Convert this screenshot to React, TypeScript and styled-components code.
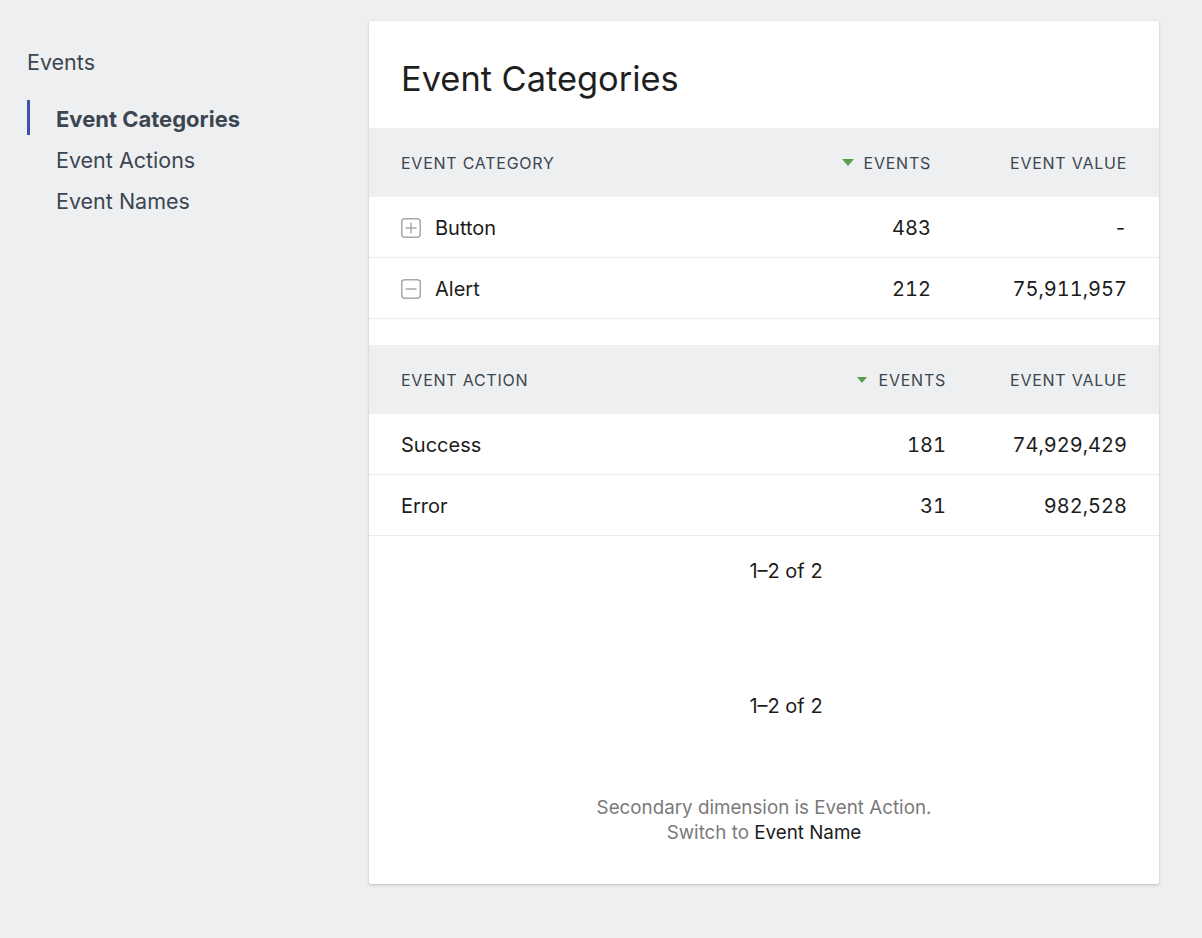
import React from "react";
import styled, { createGlobalStyle } from "styled-components";

const GlobalStyle = createGlobalStyle`
  html, body { margin: 0; padding: 0; background: #eeeff1; }
  body { font-family: Inter, "Noto Sans", sans-serif; -webkit-font-smoothing: antialiased; }
  * { box-sizing: border-box; }
`;

const Page = styled.div`
  display: grid;
  grid-template-columns: 369px 790px;
  padding-top: 21px;
  padding-bottom: 54px;
  min-height: 938px;
`;

const Sidebar = styled.aside`
  padding: 29px 0 0 27px;
`;

const SideTitle = styled.div`
  font-size: 21.5px;
  line-height: 24px;
  color: #3c4650;
  margin-bottom: 26px;
`;

const NavList = styled.nav`
  display: flex;
  flex-direction: column;
  gap: 6px;
`;

const NavItem = styled.a<{ $active?: boolean }>`
  display: flex;
  align-items: center;
  height: 35px;
  padding: 2px 0 0 26px;
  border-left: 3px solid ${(p) => (p.$active ? "#3f51a8" : "transparent")};
  font-size: ${(p) => (p.$active ? "22px" : "21.5px")};
  font-weight: ${(p) => (p.$active ? 700 : 400)};
  color: #3c4650;
  text-decoration: none;
  cursor: pointer;
`;

const Card = styled.section`
  background: #fff;
  border-radius: 2px;
  box-shadow: 0 1px 3px rgba(0, 0, 0, 0.22);
  padding-bottom: 39px;
  align-self: start;
`;

const Title = styled.h1`
  margin: 0;
  padding: 36px 32px 27px;
  font-size: 34.4px;
  line-height: 44px;
  font-weight: 400;
  color: #1f1f1f;
`;

const Row = styled.div<{ $cols: string }>`
  display: grid;
  grid-template-columns: ${(p) => p.$cols};
  align-items: center;
  padding: 0 32px;
`;

const HeadRow = styled(Row)`
  height: 69px;
  background: #eeeff1;
  font-size: 16px;
  color: #3c4650;
  text-transform: uppercase;
  letter-spacing: 0.75px;
`;

const BodyRow = styled(Row)`
  height: 61px;
  padding-top: 2px;
  border-bottom: 1px solid #ececec;
  font-size: 20px;
  color: #1c1c1c;
  font-variant-numeric: tabular-nums;
`;

const Cell = styled.div<{ $right?: boolean }>`
  display: flex;
  align-items: center;
  justify-content: ${(p) => (p.$right ? "flex-end" : "flex-start")};
  gap: 14px;
  white-space: nowrap;
`;

const SortCell = styled(Cell)<{ $gap: number }>`
  gap: ${(p) => p.$gap}px;
`;

const Triangle = styled.span<{ $w: number }>`
  width: 0;
  height: 0;
  border-left: ${(p) => p.$w / 2}px solid transparent;
  border-right: ${(p) => p.$w / 2}px solid transparent;
  border-top: ${(p) => Math.round(p.$w * 0.55)}px solid #5a9e4c;
`;

const Spacer = styled.div<{ $h: number }>`
  height: ${(p) => p.$h}px;
`;

const Pagination = styled.div`
  height: 70px;
  display: flex;
  align-items: center;
  justify-content: center;
  padding-left: 44px;
  font-size: 20px;
  color: #1c1c1c;
`;

const Footer = styled.p`
  margin: 54px 0 0;
  text-align: center;
  font-size: 18.8px;
  line-height: 25px;
  color: #7a7a7a;
`;

const FooterLink = styled.a`
  color: #1c1c1c;
  cursor: pointer;
`;

const ExpandIcon = ({ open }: { open: boolean }) => (
  <svg width="20" height="20" viewBox="0 0 20 20" fill="none">
    <rect x="0.75" y="0.75" width="18.5" height="18.5" rx="3" stroke="#a8a8a8" strokeWidth="1.5" />
    <line x1="4.5" y1="10" x2="15.5" y2="10" stroke="#a8a8a8" strokeWidth="1.5" />
    {!open && <line x1="10" y1="4.5" x2="10" y2="15.5" stroke="#a8a8a8" strokeWidth="1.5" />}
  </svg>
);

const outerCols = "1fr 150px 196px";
const innerCols = "1fr 150px 181px";

export default function App() {
  return (
    <>
      <GlobalStyle />
      <Page>
        <Sidebar>
          <SideTitle>Events</SideTitle>
          <NavList>
            <NavItem $active>Event Categories</NavItem>
            <NavItem>Event Actions</NavItem>
            <NavItem>Event Names</NavItem>
          </NavList>
        </Sidebar>
        <Card>
          <Title>Event Categories</Title>
          <HeadRow $cols={outerCols}>
            <Cell>Event Category</Cell>
            <SortCell $right $gap={10}>
              <Triangle $w={13} />
              Events
            </SortCell>
            <Cell $right>Event Value</Cell>
          </HeadRow>
          <BodyRow $cols={outerCols}>
            <Cell>
              <ExpandIcon open={false} />
              Button
            </Cell>
            <Cell $right>483</Cell>
            <Cell $right>-</Cell>
          </BodyRow>
          <BodyRow $cols={outerCols}>
            <Cell>
              <ExpandIcon open />
              Alert
            </Cell>
            <Cell $right>212</Cell>
            <Cell $right>75,911,957</Cell>
          </BodyRow>
          <Spacer $h={26} />
          <HeadRow $cols={innerCols}>
            <Cell>Event Action</Cell>
            <SortCell $right $gap={12}>
              <Triangle $w={10} />
              Events
            </SortCell>
            <Cell $right>Event Value</Cell>
          </HeadRow>
          <BodyRow $cols={innerCols}>
            <Cell>Success</Cell>
            <Cell $right>181</Cell>
            <Cell $right>74,929,429</Cell>
          </BodyRow>
          <BodyRow $cols={innerCols}>
            <Cell>Error</Cell>
            <Cell $right>31</Cell>
            <Cell $right>982,528</Cell>
          </BodyRow>
          <Pagination>1–2 of 2</Pagination>
          <Spacer $h={65} />
          <Pagination>1–2 of 2</Pagination>
          <Footer>
            Secondary dimension is Event Action.
            <br />
            Switch to <FooterLink>Event Name</FooterLink>
          </Footer>
        </Card>
      </Page>
    </>
  );
}
